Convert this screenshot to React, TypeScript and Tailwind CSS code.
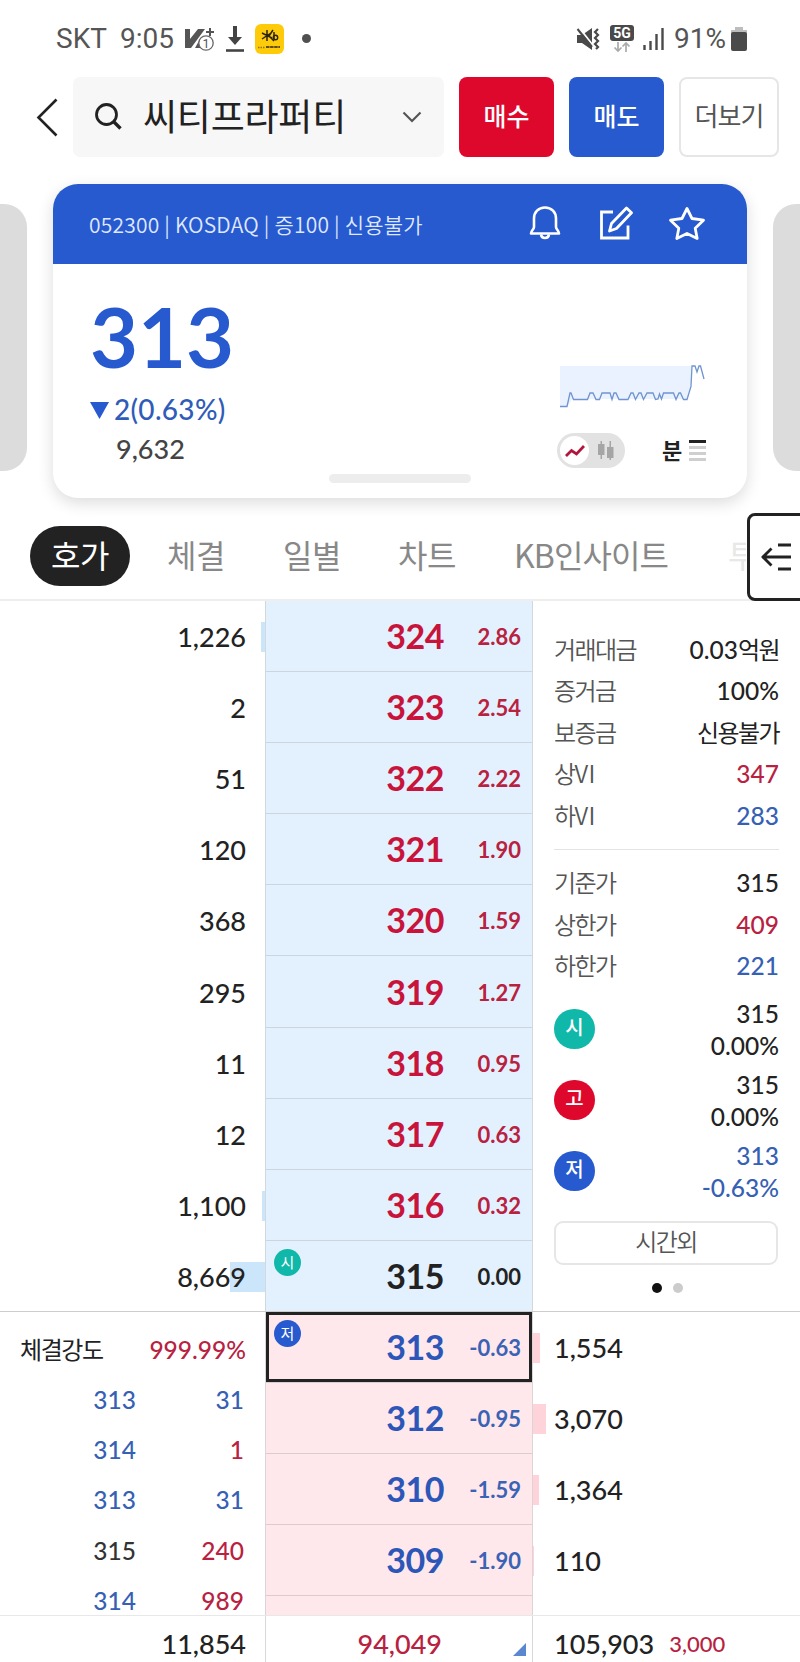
import clsx from "clsx";

const asks = [
    { price: "324", rate: "2.86", qty: "1,226", bar: 4 },
    { price: "323", rate: "2.54", qty: "2", bar: 0 },
    { price: "322", rate: "2.22", qty: "51", bar: 0 },
    { price: "321", rate: "1.90", qty: "120", bar: 0 },
    { price: "320", rate: "1.59", qty: "368", bar: 0 },
    { price: "319", rate: "1.27", qty: "295", bar: 0 },
    { price: "318", rate: "0.95", qty: "11", bar: 0 },
    { price: "317", rate: "0.63", qty: "12", bar: 0 },
    { price: "316", rate: "0.32", qty: "1,100", bar: 3 },
    { price: "315", rate: "0.00", qty: "8,669", bar: 35 },
];

const bids = [
    { price: "313", rate: "-0.63", qty: "1,554", bar: 7 },
    { price: "312", rate: "-0.95", qty: "3,070", bar: 13 },
    { price: "310", rate: "-1.59", qty: "1,364", bar: 6 },
    { price: "309", rate: "-1.90", qty: "110", bar: 1 },
];

const trades = [
    { price: "313", qty: "31", priceColor: "text-[#3560b4]", qtyColor: "text-[#3560b4]" },
    { price: "314", qty: "1", priceColor: "text-[#3560b4]", qtyColor: "text-[#b8213f]" },
    { price: "313", qty: "31", priceColor: "text-[#3560b4]", qtyColor: "text-[#3560b4]" },
    { price: "315", qty: "240", priceColor: "text-[#333333]", qtyColor: "text-[#b8213f]" },
    { price: "314", qty: "989", priceColor: "text-[#3560b4]", qtyColor: "text-[#b8213f]" },
];

const limits = [
    { label: "거래대금", value: "0.03", unit: "억원", color: "text-[#222222]" },
    { label: "증거금", value: "100%", color: "text-[#222222]" },
    { label: "보증금", value: "", unit: "신용불가", color: "text-[#222222]" },
    { label: "상", suffix: "VI", value: "347", color: "text-[#b8213f]" },
    { label: "하", suffix: "VI", value: "283", color: "text-[#3560b4]" },
];

const bases = [
    { label: "기준가", value: "315", color: "text-[#222222]" },
    { label: "상한가", value: "409", color: "text-[#b8213f]" },
    { label: "하한가", value: "221", color: "text-[#3560b4]" },
];

const marks = [
    { label: "시", bg: "bg-[#0fb8a9]", price: "315", rate: "0.00%", color: "text-[#222222]" },
    { label: "고", bg: "bg-[#de082c]", price: "315", rate: "0.00%", color: "text-[#222222]" },
    { label: "저", bg: "bg-[#2759cf]", price: "313", rate: "-0.63%", color: "text-[#3560b4]" },
];

const KR = "font-['Noto_Sans_CJK_KR',sans-serif]";

function StatusBar() {
    return (
        <div className="flex h-[77px] items-center pl-[56px] pr-[52px] font-['Roboto',sans-serif] text-[28px] leading-none text-[#555555]">
            <span className="w-[64px]">SKT</span>
            <span className="w-[65px]">9:05</span>
            <svg width="30" height="26" viewBox="0 0 30 26" className="shrink-0">
                <path d="M0 3h5v10L13 3h7L6 22H0z" fill="#555" />
                <path d="M10 22l5-9 3 9z" fill="#555" />
                <path d="M25 2v8M21 6h8" stroke="#555" strokeWidth="2" />
                <circle cx="21" cy="17" r="7.2" fill="#fff" stroke="#666" strokeWidth="1.3" />
                <text x="21" y="21.5" textAnchor="middle" fontSize="12.5" fontFamily="Roboto" fill="#555">1</text>
            </svg>
            <svg width="20" height="26" viewBox="0 0 20 26" className="ml-[10px] shrink-0">
                <path d="M8 0h4v11h5l-7 8-7-8h5z" fill="#444" />
                <path d="M1 24.5h18" stroke="#444" strokeWidth="2.6" />
            </svg>
            <div className="ml-[10px] flex h-[30px] w-[29px] shrink-0 flex-col items-center rounded-[6px] bg-[#fecb0b]">
                <svg width="29" height="30" viewBox="0 0 29 30" fill="none" stroke="#2b2410">
                    <path d="M7 9l10 5M7 15l9-6M12 6v11M18 6l-4 6 5 5M19 8v7" strokeWidth="1.5" />
                    <circle cx="20.5" cy="13.5" r="2.2" strokeWidth="1.4" />
                    <path d="M3 23.500h7" strokeWidth="1.600" strokeDasharray="1.5 1" opacity=".5" />
                    <path d="M11 23h14" strokeWidth="2.200" strokeDasharray="3.5 .6" opacity=".75" />
                </svg>
            </div>
            <span className="ml-[18px] size-[9px] rounded-full bg-[#505050]" />

            <svg width="24" height="24" viewBox="0 0 24 24" className="ml-auto shrink-0">
                <path d="M1 8h5l10-7v22l-10-7H1z" fill="#4a4a4a" />
                <path d="M2.500 0l15 19" stroke="#fff" strokeWidth="2" />
                <path d="M1.500 2l14.500 18" stroke="#4a4a4a" strokeWidth="2" />
                <path d="M22 2l-3 3 3 3-3 3 3 3-3 3 3 3-2 2" stroke="#4a4a4a" strokeWidth="2.200" fill="none" />
            </svg>
            <svg width="24" height="28" viewBox="0 0 24 28" className="ml-[10px] shrink-0">
                <rect width="24" height="16" rx="3" fill="#4a4a4a" />
                <text x="12" y="13" textAnchor="middle" fontSize="14" fontWeight="700" fontFamily="Roboto" fill="#fff">5G</text>
                <path d="M8 17v9M4.500 22.500L8 26l3.500-3.500M16 27v-9M12.500 21.500L16 18l3.500 3.500" stroke="#aaa" strokeWidth="1.700" fill="none" />
            </svg>
            <svg width="21" height="22" viewBox="0 0 21 22" className="ml-[9px] shrink-0">
                <path d="M1.500 22v-5M7.500 22v-9M13.500 22V6M19.500 22V0" stroke="#4a4a4a" strokeWidth="2.400" />
            </svg>
            <span className="ml-[10px] w-[57px] shrink-0 whitespace-nowrap">91%</span>
            <svg width="16" height="24" viewBox="0 0 16 24" className="mr-px shrink-0">
                <path d="M4 0h8v3h4v5H0V3h4z" fill="#bdbdbd" />
                <rect y="5" width="16" height="19" rx="2" fill="#4a4a4a" />
            </svg>
        </div>
    );
}

function Header() {
    return (
        <div className="flex h-[80px] items-center pl-[36px] pr-[21px]">
            <svg width="22" height="40" viewBox="0 0 22 40" fill="none" stroke="#222" strokeWidth="2.6" className="shrink-0">
                <path d="M20.500 2.500L2.500 20.500l18 18" />
            </svg>
            <div className="ml-[15px] flex h-full w-[371px] items-center rounded-[7px] bg-[#f7f7f7] pl-[21px] pr-[22px]">
                <svg width="30" height="30" viewBox="0 0 30 30" fill="none" stroke="#222" strokeWidth="2.800">
                    <circle cx="12.500" cy="12.500" r="10" />
                    <path d="M19 19l7.500 7.500" strokeWidth="3.400" />
                </svg>
                <span className={clsx(KR, "ml-[19px] mt-[-4px] whitespace-nowrap text-[37px] leading-none tracking-[-0.200px] text-[#222222]")}>씨티프라퍼티</span>
                <svg width="20" height="12" viewBox="0 0 20 12" fill="none" stroke="#555" strokeWidth="2.200" className="ml-auto shrink-0">
                    <path d="M1.500 1.500l8.500 8.500 8.500-8.500" />
                </svg>
            </div>
            <button className={clsx(KR, "ml-[15px] h-full w-[95px] rounded-[8px] bg-[#de082c] pb-[4px] text-[25px] font-medium leading-none text-white")}>매수</button>
            <button className={clsx(KR, "ml-[15px] h-full w-[95px] rounded-[8px] bg-[#2759cf] pb-[4px] text-[25px] font-medium leading-none text-white")}>매도</button>
            <button className={clsx(KR, "ml-[15px] h-full w-[100px] rounded-[8px] border-2 border-[#e6e6e6] pb-[4px] text-[26px] leading-none tracking-[-1px] text-[#555555]")}>더보기</button>
        </div>
    );
}

function PriceCard() {
    return (
        <div className="mt-[27px] flex h-[314px] justify-between">
            <div className="mt-[20px] h-[267px] w-[27px] rounded-r-[23px] bg-[#dcdcdc]" />
            <div className="flex w-[694px] flex-col rounded-[25px] bg-white shadow-[0_5px_16px_rgba(0,0,0,0.14)]">
                <div className="flex h-[80px] shrink-0 items-center rounded-t-[25px] bg-[#2759cf] pl-[36px] pr-[41px]">
                    <span className={clsx(KR, "whitespace-pre text-[21px] font-[350] leading-none tracking-[0.200px] text-[#dfe8ff]")}>052300 | KOSDAQ | 증100 | 신용불가</span>
                    <svg width="32" height="36" viewBox="0 0 32 36" fill="none" stroke="#fff" strokeWidth="2.600" strokeLinejoin="round" className="ml-auto mt-[-2px] shrink-0">
                        <path d="M16 2.500c-6.600 0-11 4.700-11 11V22c0 2.500-3 3.700-3 6.500h28c0-2.800-3-4-3-6.500v-8.500c0-6.300-4.400-11-11-11z" />
                        <path d="M12 29.500c.3 2 1.800 3.500 4 3.500s3.700-1.500 4-3.500" />
                    </svg>
                    <svg width="34" height="36" viewBox="0 0 34 36" fill="none" stroke="#fff" strokeWidth="2.800" className="ml-[38px] mt-[-2px] shrink-0">
                        <path d="M14 7H2.500v26H29V20.500" />
                        <path d="M10.500 26l2-7.500L27.500 3l5 4.700L17.500 23.500z" strokeLinejoin="round" />
                    </svg>
                    <svg width="38" height="36" viewBox="0 0 38 36" fill="none" stroke="#fff" strokeWidth="2.800" strokeLinejoin="round" className="ml-[35px] mt-[-2px] shrink-0">
                        <path d="M19 3.500l5 10 11.500 1.700-8.300 8 2 10.300L19 28.500l-10.200 5 2-10.300-8.300-8L14 13.500z" />
                    </svg>
                </div>

                <div className="flex grow justify-between pl-[37px] pr-[41px]">
                    <div className="pt-[23px] font-['Lato',sans-serif]">
                        <p className="h-[98px] text-[83px] font-bold leading-[98px] tracking-[-0.2px] text-[#2759cf]">313</p>
                        <p className="mt-[4px] flex h-[40px] items-center text-[28px] font-medium leading-none text-[#2f5cb8]">
                            <svg width="19" height="17" viewBox="0 0 19 17" className="mr-[5px] mt-[3px]">
                                <path d="M0 0h19L9.500 17z" fill="#2759cf" />
                            </svg>
                            <span className="tracking-[0.300px]">2(0.63%)</span>
                        </p>
                        <p className="flex h-[39px] items-center pl-[26px] text-[27px] font-medium leading-none text-[#444444]">9,632</p>
                    </div>

                    <div className="w-[149px] pt-[100px]">
                        <svg width="145" height="46" viewBox="0 0 145 46" className="ml-[3px]">
                            <path d="M0 2h131v18l-4 15H12L8 42H0z" fill="#eaf2ff" />
                            <path
                                d="M0 42.500h7L10 29l1 0 2.500 6.500h14L30 29h3l3 6.500h3.500L42 29h8l2 6.500L54 29h2l3 6.500h9L71 29h2l2.500 6.500L79 29h2l2.500 6.500L87 29h6l2.500 6.500L98 35l1.500-5 2 5 2-6h10l2.500 6.500L119 29h1.500l3 6.500h3.500l4-13 1-20.500h3l2 6 2-6h1.500l3.500 13"
                                fill="none"
                                stroke="#6f94cf"
                                strokeWidth="1.300"
                            />
                        </svg>
                        <div className="mt-[23px] flex items-center">
                            <div className="flex h-[35px] w-[68px] items-center rounded-full bg-[#e2e2e2] pl-[3px]">
                                <span className="flex size-[29px] items-center justify-center rounded-full bg-white">
                                    <svg width="20" height="14" viewBox="0 0 20 14" fill="none" stroke="#b3163c" strokeWidth="2.800">
                                        <path d="M1 12l5.500-5.500 5 3.500L19 2" />
                                    </svg>
                                </span>
                                <svg width="16" height="20" viewBox="0 0 16 20" fill="#a5a5a5" className="ml-[9px]">
                                    <path d="M2.500 0h1.500v3h2.500v11H4v4H2.500v-4H0V3h2.500zM11.500 0H13v6h2.500v11H13v2h-1.500v-2H9V6h2.500z" />
                                </svg>
                            </div>
                            <span className={clsx(KR, "ml-[37px] mt-[-3px] text-[22px] font-bold leading-none text-[#222222]")}>분</span>
                            <div className="ml-auto flex w-[17px] flex-col gap-[3px]">
                                <span className="h-[3px] bg-[#222222]" />
                                <span className="h-[3px] bg-[#cfcfcf]" />
                                <span className="h-[3px] bg-[#cfcfcf]" />
                                <span className="h-[3px] bg-[#cfcfcf]" />
                            </div>
                        </div>
                    </div>
                </div>
                <div className="mx-auto mb-[15px] h-[9px] w-[142px] shrink-0 rounded-full bg-[#ededed]" />
            </div>
            <div className="mt-[20px] h-[267px] w-[27px] rounded-l-[23px] bg-[#dcdcdc]" />
        </div>
    );
}

function Tabs() {
    return (
        <div className={clsx(KR, "relative flex h-[103px] items-start whitespace-nowrap border-b-2 border-[#eeeeee] pl-[30px] pt-[28px] text-[32px] leading-[56px] tracking-[-0.500px] text-[#888888]")}>
            <span className="h-[60px] w-[100px] rounded-full bg-[#222222] text-center text-white">호가</span>
            <span className="ml-[37px] w-[116px]">체결</span>
            <span className="w-[115px]">일별</span>
            <span className="w-[116px]">차트</span>
            <span className="w-[214px] tracking-[-0.900px]">KB인사이트</span>
            <span className="w-[18px] overflow-hidden text-[#e8e8e8]">투</span>
            <div className="absolute left-[747px] top-[15px] flex h-[88px] w-[60px] items-center rounded-[8px] border-[3px] border-[#222222] bg-white pl-[10px]">
                <svg width="34" height="30" viewBox="0 0 34 30" fill="none" stroke="#222" strokeWidth="2.800">
                    <path d="M18 3h13M2 15h29M18 27h13M11.500 6.500L3 15l8.500 8.500" />
                </svg>
            </div>
        </div>
    );
}

function PriceCell({ price, rate, down }: { price: string; rate: string; down?: boolean }) {
    const flat = rate === "0.00";
    return (
        <>
            <span className={clsx("text-[34px] font-bold tracking-[-0.500px]", down ? "text-[#2c56b8]" : flat ? "text-[#222222]" : "text-[#c8143a]")}>{price}</span>
            <span className={clsx("w-[77px] pt-[2px] text-right text-[22px] font-bold", down ? "text-[#3a62b5]" : flat ? "text-[#222222]" : "text-[#b8213f]")}>{rate}</span>
        </>
    );
}

function InfoRow({ label, suffix, value, unit, color }: { label: string; suffix?: string; value: string; unit?: string; color: string }) {
    return (
        <div className="flex h-[41.500px] items-center justify-between whitespace-nowrap leading-none">
            <span className={clsx(KR, "mt-[-2px] text-[24px] font-[350] tracking-[-1.600px] text-[#555555]")}>
                {label}
                {suffix && <span className="tracking-[0.500px]">{suffix}</span>}
            </span>
            <span className={clsx("flex items-center text-[24.500px] font-medium", color)}>
                {value}
                {unit && <span className={clsx(KR, "mt-[-2px] text-[24px] font-normal tracking-[-1.600px]")}>{unit}</span>}
            </span>
        </div>
    );
}

function AskBook() {
    return (
        <div className="flex h-[711px] border-b border-[#cccccc]">
            <div className="w-[265px]">
                {asks.map((row) => (
                    <div key={row.price} className="relative flex h-[71.100px] items-center justify-end pr-[19px] text-[27px] font-medium text-[#222222]">
                        <span className="absolute right-0 top-[21px] h-[30px] bg-[#cbe5fb]" style={{ width: row.bar }} />
                        <span className="relative">{row.qty}</span>
                    </div>
                ))}
            </div>
            <div className="w-[268px] border-x border-[#d3d8dd] bg-[#e3f1fe]">
                {asks.map((row) => (
                    <div key={row.price} className="relative flex h-[71.100px] items-center justify-end border-b border-[#cdd6df] pr-[11px] last:border-0">
                        {row.price === "315" && (
                            <span className={clsx(KR, "absolute left-[8px] top-[8px] flex size-[27px] items-center justify-center rounded-full bg-[#0fb8a9] pb-[2px] text-[15px] text-white")}>시</span>
                        )}
                        <PriceCell price={row.price} rate={row.rate} />
                    </div>
                ))}
            </div>
            <div className="grow pl-[21px] pr-[21px] pt-[28px]">
                {limits.map((row) => (
                    <InfoRow key={row.label} {...row} />
                ))}
                <div className="mb-[13px] mt-[12px] h-px bg-[#e3e3e3]" />
                {bases.map((row) => (
                    <InfoRow key={row.label} {...row} />
                ))}
                <div className="mt-[6px]">
                    {marks.map((row) => (
                        <div key={row.label} className="flex h-[71.100px] items-center justify-between">
                            <span className={clsx(KR, "flex h-[40px] w-[41px] items-center justify-center rounded-full pb-[3px] text-[20px] font-medium leading-none text-white", row.bg)}>{row.label}</span>
                            <div className={clsx("pt-[3px] text-right text-[24.500px] font-medium leading-[32.500px]", row.color)}>
                                <p>{row.price}</p>
                                <p>{row.rate}</p>
                            </div>
                        </div>
                    ))}
                </div>
                <button className={clsx(KR, "mt-[15px] block h-[44px] w-[224px] rounded-[9px] border-2 border-[#e6e6e6] pb-[4px] text-[24px] font-[350] leading-none tracking-[-1.600px] text-[#555555]")}>시간외</button>
                <div className="mt-[18px] flex gap-[11px] pl-[98px]">
                    <span className="size-[10px] rounded-full bg-[#111111]" />
                    <span className="size-[10px] rounded-full bg-[#cccccc]" />
                </div>
            </div>
        </div>
    );
}

function BidBook() {
    return (
        <div className="flex h-[304px] border-b border-[#e8e8e8]">
            <div className="w-[265px] pl-[20px] pt-[13px] text-[24.500px] font-medium">
                <div className="flex h-[50px] items-center justify-between pr-[19px]">
                    <span className={clsx(KR, "mt-[-2px] text-[24px] font-normal tracking-[-1.400px] text-[#222222]")}>체결강도</span>
                    <span className="text-[#b8213f]">999.99%</span>
                </div>
                {trades.map((row, i) => (
                    <div key={i} className="flex h-[50.300px] items-center pr-[21px]">
                        <span className={clsx("w-[116px] text-right", row.priceColor)}>{row.price}</span>
                        <span className={clsx("grow text-right", row.qtyColor)}>{row.qty}</span>
                    </div>
                ))}
            </div>
            <div className="w-[268px] shrink-0 overflow-hidden border-x border-[#dcd5d8] bg-[#fee8eb]">
                {bids.map((row, i) => (
                    <div key={row.price} className="relative flex h-[71.100px] items-center justify-end border-b border-[#dccbd0] pr-[11px]">
                        {i === 0 && (
                            <>
                                <span className="absolute inset-0 border-[3px] border-[#222222]" />
                                <span className={clsx(KR, "absolute left-[8px] top-[8px] flex size-[27px] items-center justify-center rounded-full bg-[#2759cf] pb-[2px] text-[15px] text-white")}>저</span>
                            </>
                        )}
                        <PriceCell price={row.price} rate={row.rate} down />
                    </div>
                ))}
            </div>
            <div className="grow">
                {bids.map((row) => (
                    <div key={row.price} className="relative flex h-[71.100px] items-center pl-[21px] text-[27px] font-medium text-[#222222]">
                        <span className="absolute left-0 top-[21px] h-[30px] bg-[#fed3d9]" style={{ width: row.bar }} />
                        {row.qty}
                    </div>
                ))}
            </div>
        </div>
    );
}

function Totals() {
    return (
        <div className="flex h-[46px] text-[27px] font-medium text-[#222222]">
            <div className="flex w-[265px] items-center justify-end pr-[19px] pt-[9px]">11,854</div>
            <div className="flex w-[268px] items-center justify-end border-x border-[#d8d8d8] pr-[6px] pt-[9px] text-[#b8213f]">
                94,049
                <svg width="13" height="13" viewBox="0 0 13 13" className="ml-[71px] mt-[12px]">
                    <path d="M13 0v13H0z" fill="#5b87d0" />
                </svg>
            </div>
            <div className="flex grow items-center pl-[21px] pt-[9px]">
                105,903
                <span className="ml-[15px] text-[22px] text-[#b8213f]">3,000</span>
            </div>
        </div>
    );
}

export default function App() {
    return (
        <div className="h-[1662px] w-[800px] overflow-hidden bg-white font-['Lato','Noto_Sans_CJK_KR',sans-serif] leading-none">
            <StatusBar />
            <Header />
            <PriceCard />
            <Tabs />
            <AskBook />
            <BidBook />
            <Totals />
        </div>
    );
}
